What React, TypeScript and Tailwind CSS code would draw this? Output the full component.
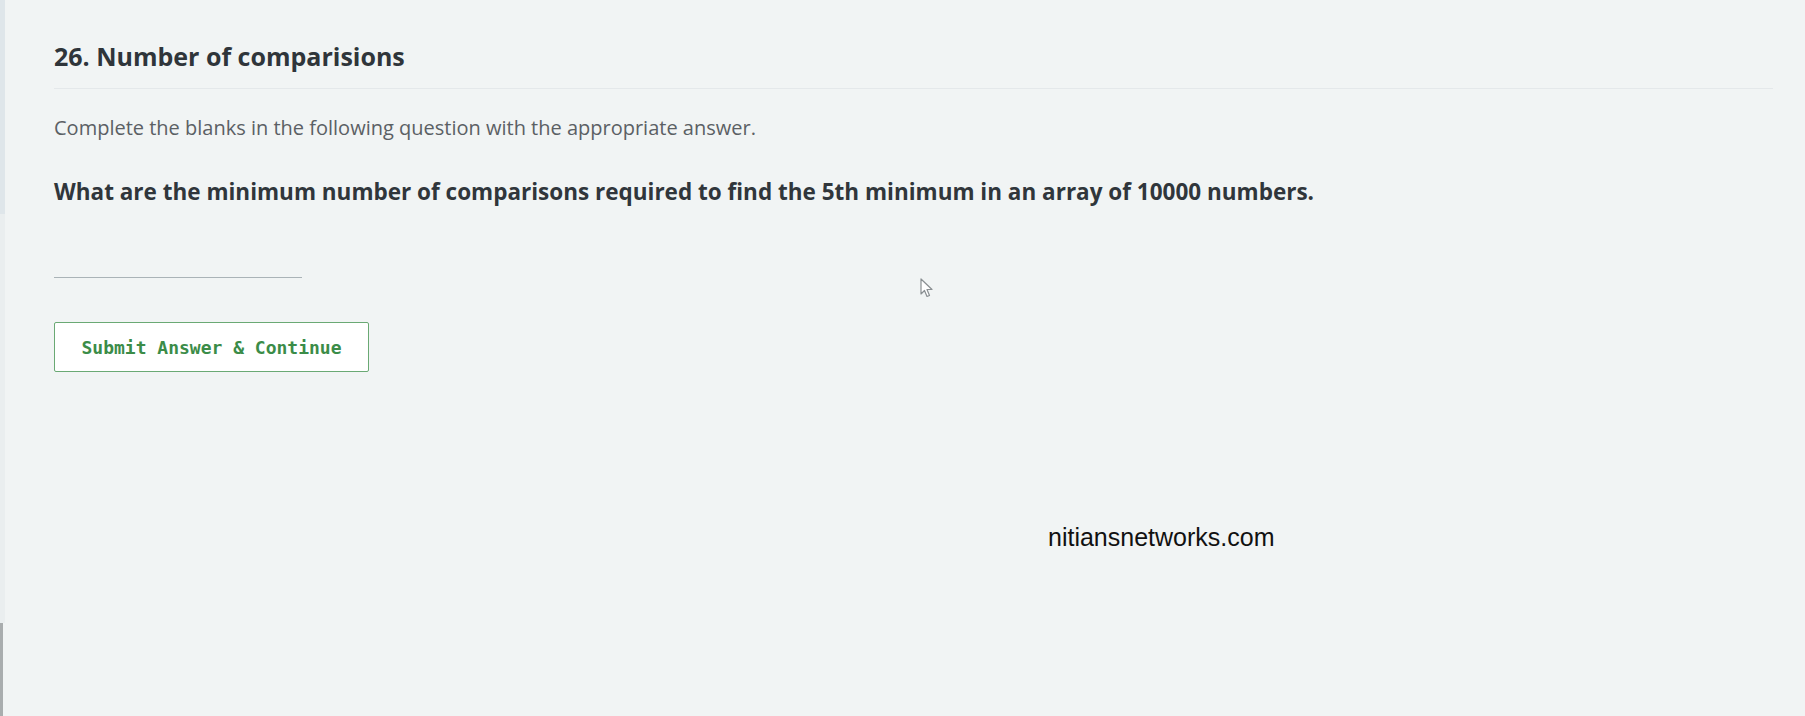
function App() {
    return (
        <div className="relative w-[1805px] h-[716px] overflow-hidden bg-[#f1f4f4] flex" style={{ fontFamily: '"Open Sans", sans-serif' }}>
            {/* left edge strip */}
            <div className="w-[5px] flex flex-col">
                <div className="h-[214px] bg-[#dfe6ea]" />
                <div className="flex-1 bg-[#eaeeef]" />
                <div className="h-[93px] w-[3px] bg-[#a9adae]" />
            </div>

            <section className="flex-1 pl-[49px] pr-[32px] pt-[41px]">
                <h2 className="text-[25px] leading-[31px] font-bold text-[#2f353a] pb-4 border-b border-[#e4e8ea]">
                    26. Number of comparisions
                </h2>
                <p className="mt-[25px] text-[20px] leading-[27px] text-[#5b6064]">
                    Complete the blanks in the following question with the appropriate answer.
                </p>
                <p className="mt-[36px] text-[22.5px] leading-[30px] font-bold text-[#30363b]">
                    What are the minimum number of comparisons required to find the 5th minimum in an array of 10000 numbers.
                </p>
                <input
                    type="text"
                    className="mt-[31px] block w-[248px] h-[40px] bg-transparent border-0 border-b border-[#aab3b7] outline-none"
                />
                <button className="mt-[44px] w-[315px] h-[50px] bg-white border border-[#6aa974] rounded-[2px] text-[18px] font-bold text-[#3b8c48]" style={{ fontFamily: '"DejaVu Sans Mono", monospace' }}>
                    Submit Answer &amp; Continue
                </button>
            </section>

            {/* watermark */}
            <div className="absolute left-[1048px] top-[521px] text-[25px] leading-[32px] text-[#111]" style={{ fontFamily: '"Liberation Sans", Arial, sans-serif' }}>
                nitiansnetworks.com
            </div>

            {/* mouse cursor */}
            <svg className="absolute left-[920px] top-[278px]" width="13" height="20" viewBox="0 0 13 20">
                <path d="M1 1 L1 16 L4.5 12.5 L7 18.5 L9.5 17.5 L7 11.5 L12 11.5 Z" fill="#fff" stroke="#8a8f92" strokeWidth="1.2" strokeLinejoin="round" />
            </svg>
        </div>
    )
}

export default App
